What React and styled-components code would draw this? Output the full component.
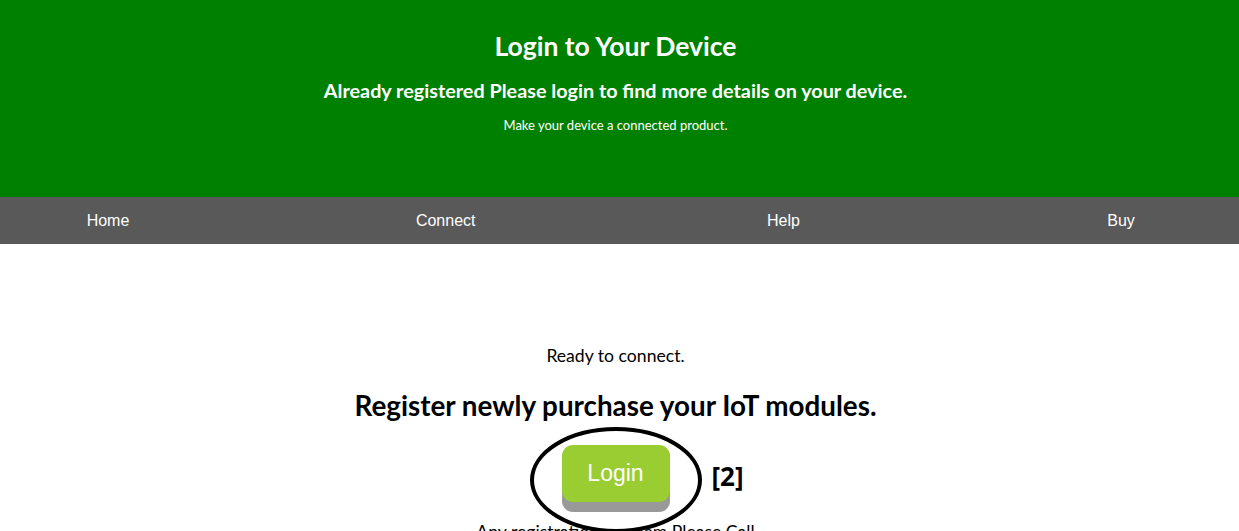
import styled, { createGlobalStyle } from 'styled-components';

const Global = createGlobalStyle`
  body {
    margin: 0;
    background: #fff;
    font-family: Lato, "Open Sans", sans-serif;
    color: #000;
    overflow: hidden;
  }
`;

const Header = styled.header`
  background: #008000;
  color: #fff;
  height: 197px;
  padding: 31px 8px 0 0;
  box-sizing: border-box;
  text-align: center;
`;

const Title = styled.h1`
  margin: 0;
  font-size: 26.5px;
  line-height: 30px;
  font-weight: 700;
`;

const Subtitle = styled.h3`
  margin: 17px 0 0;
  font-size: 19.8px;
  line-height: 24px;
  font-weight: 700;
`;

const Tagline = styled.p`
  margin: 14px 0 0;
  font-size: 13px;
  line-height: 18px;
`;

const Nav = styled.ul`
  list-style: none;
  margin: 0;
  padding: 0 0 0 48px;
  height: 47px;
  background: #595959;
  display: flex;
  align-items: center;
  gap: 217.7px;
  li {
    width: 120px;
    text-align: center;
    margin-top: -2px;
  }
  li a {
    color: #fff;
    text-decoration: none;
    font-family: "Liberation Sans", Arial, sans-serif;
    font-size: 16px;
  }
`;

const Main = styled.main`
  text-align: center;
  padding: 101px 8px 0 0;
`;

const Ready = styled.p`
  margin: 0;
  font-size: 17.6px;
  line-height: 22px;
`;

const Heading = styled.h2`
  margin: 23px 0 0;
  font-size: 27.8px;
  line-height: 32px;
  font-weight: 700;
`;

const ButtonRow = styled.div`
  display: flex;
  justify-content: center;
  margin-top: 23px;
`;

const ButtonWrap = styled.div`
  position: relative;
  width: 108px;
`;

const LoginButton = styled.button`
  position: relative;
  z-index: 2;
  width: 108px;
  height: 57px;
  border: none;
  border-radius: 11px;
  background: #9acd32;
  color: #fff;
  font-family: "Liberation Sans", Arial, sans-serif;
  font-size: 23px;
  box-shadow: 0 10px #999;
  cursor: pointer;
`;

const Ring = styled.svg`
  position: absolute;
  z-index: 1;
  left: -33px;
  top: -18px;
  width: 174px;
  height: 106px;
`;

const Marker = styled.span`
  position: absolute;
  z-index: 2;
  left: 150px;
  top: 16px;
  font-family: "Open Sans", sans-serif;
  font-weight: 700;
  font-size: 26px;
  line-height: 30px;
  white-space: nowrap;
`;

const Note = styled.p`
  margin: 19px 0 0;
  font-size: 17.6px;
  line-height: 22px;
`;

export default function App() {
  return (
    <>
      <Global />
      <Header>
        <Title>Login to Your Device</Title>
        <Subtitle>Already registered Please login to find more details on your device.</Subtitle>
        <Tagline>Make your device a connected product.</Tagline>
      </Header>
      <Nav>
        <li><a href="#">Home</a></li>
        <li><a href="#">Connect</a></li>
        <li><a href="#">Help</a></li>
        <li><a href="#">Buy</a></li>
      </Nav>
      <Main>
        <Ready>Ready to connect.</Ready>
        <Heading>Register newly purchase your IoT modules.</Heading>
        <ButtonRow>
          <ButtonWrap>
            <Ring viewBox="0 0 174 106">
              <ellipse cx="87" cy="53" rx="84" ry="51" fill="#fff" stroke="#000" strokeWidth="4" />
            </Ring>
            <LoginButton>Login</LoginButton>
            <Marker>[2]</Marker>
          </ButtonWrap>
        </ButtonRow>
        <Note>Any registration problem Please Call</Note>
      </Main>
    </>
  );
}
